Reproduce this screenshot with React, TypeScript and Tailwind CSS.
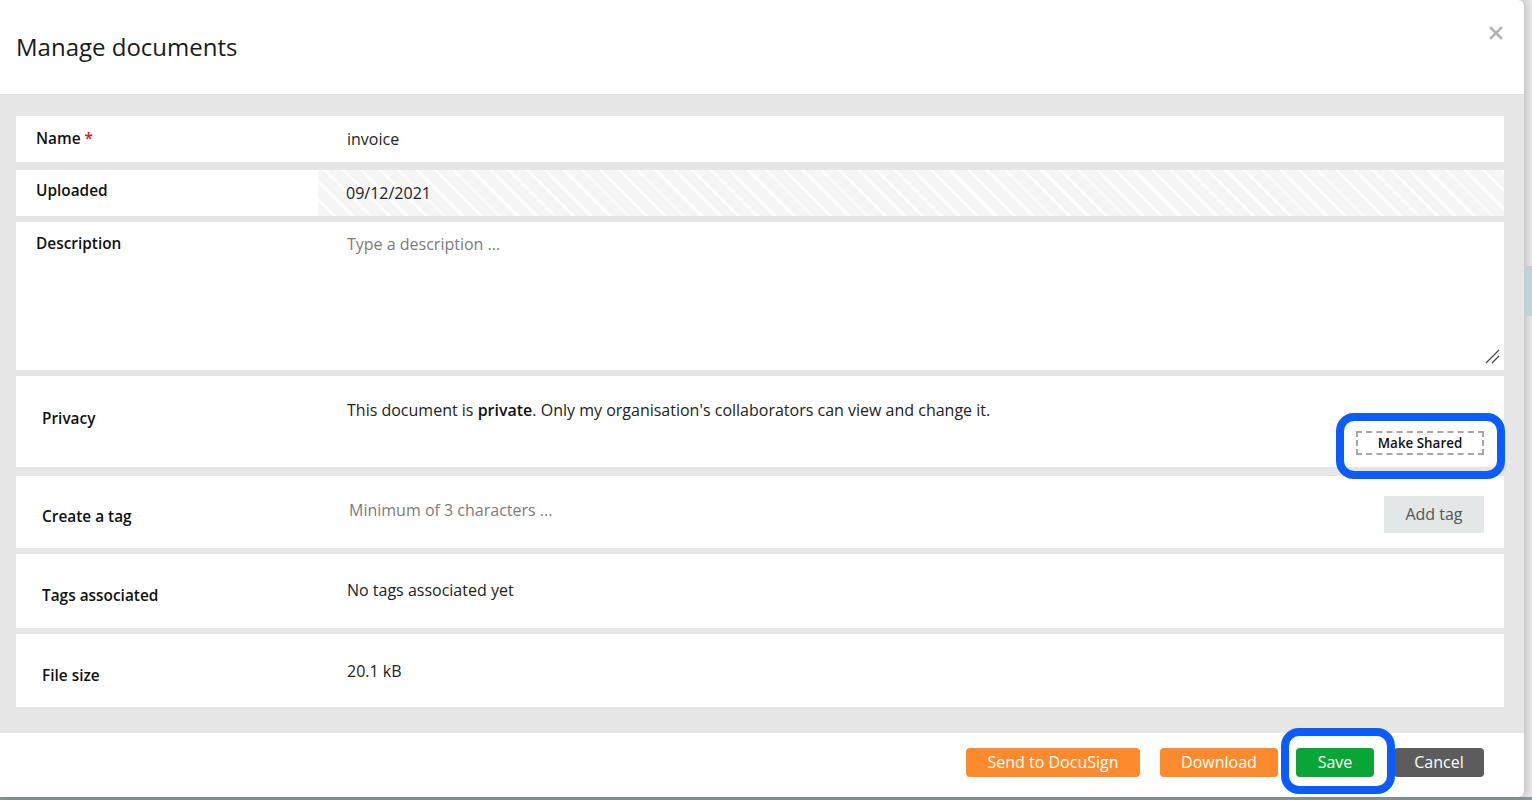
import React from "react";

const labelCls = "text-[15.4px] font-semibold text-[#111]";
const valueCls = "text-[16px] text-[#222]";

const App = () => {
  return (
    <div className="flex h-[800px] w-full flex-col overflow-hidden bg-[#8b9797] font-['Open_Sans',sans-serif]">
      <div className="flex h-[797px] w-full bg-[#e6e6e6]">
        {/* Modal */}
        <div className="flex h-[797px] w-[1524px] shrink-0 flex-col rounded-r-[6px] bg-white shadow-[2px_0_6px_rgba(0,0,0,0.18)]">
          {/* Header */}
          <div className="flex h-[95px] shrink-0 items-start justify-between border-b border-[#dedede] pl-4 pr-[21px]">
            <h1 className="mt-[31px] text-[24px] leading-[32px] text-[#1a1a1a]">Manage documents</h1>
            <button className="mt-[26px] flex h-[14px] w-[14px] items-center justify-center">
              <svg width="14" height="14" viewBox="0 0 14 14">
                <path d="M2 2 L12 12 M12 2 L2 12" stroke="#b3b3b3" strokeWidth="2.6" strokeLinecap="square" />
              </svg>
            </button>
          </div>

          {/* Body */}
          <div className="flex flex-1 flex-col bg-[#e6e6e6] pl-4 pr-5 pt-[21px] pb-[26px]">
            {/* Name */}
            <div className="flex h-[46px] items-center bg-white pl-5">
              <div className={`w-[311px] ${labelCls}`}>
                Name <span className="text-[#e8101a]">*</span>
              </div>
              <div className={valueCls}>invoice</div>
            </div>

            {/* Uploaded */}
            <div className="mt-2 flex h-[46px] bg-white">
              <div className={`flex w-[302px] items-center pl-5 pb-1 ${labelCls}`}>Uploaded</div>
              <div className="flex flex-1 items-center bg-[repeating-linear-gradient(45deg,#f5f5f5_0px,#f5f5f5_10px,#fdfdfd_10px,#fdfdfd_13px)] pl-[28px]">
                <span className={valueCls}>09/12/2021</span>
              </div>
            </div>

            {/* Description */}
            <div className="mt-[6px] flex h-[148px] bg-white">
              <div className={`w-[302px] pl-5 pt-[10px] leading-[24px] ${labelCls}`}>Description</div>
              <textarea
                className="flex-1 resize-none border-0 bg-transparent pl-[29px] pt-[10px] text-[16px] leading-[24px] text-[#222] outline-none placeholder:text-[#7c7c7c]"
                placeholder="Type a description ..."
              />
              <svg className="mb-[6px] mr-[4px] shrink-0 self-end" width="15" height="15" viewBox="0 0 15 15">
                <path d="M1 14 L14 1 M7 14 L14 7" stroke="#4a4a4a" strokeWidth="1.3" />
              </svg>
            </div>

            {/* Privacy */}
            <div className="mt-[6px] flex h-[91px] bg-white pl-[26px] pr-5">
              <div className={`mb-[6px] w-[305px] self-center ${labelCls}`}>Privacy</div>
              <div className="flex flex-1 flex-col pt-[22px]">
                <p className={`leading-[24px] ${valueCls}`}>
                  This document is <span className="font-semibold text-[#111]">private</span>. Only my organisation's
                  collaborators can view and change it.
                </p>
                <div className="relative mt-[9px] self-end">
                  <div className="pointer-events-none absolute -top-[18px] -bottom-[24px] -left-[20px] -right-[21px] rounded-[18px] border-[8px] border-[#0a5cff]" />
                  <button className="flex h-[24px] w-[128px] items-center justify-center border-2 border-dashed border-[#a6a6a6] text-[13.4px] font-semibold text-[#111]">
                    Make Shared
                  </button>
                </div>
              </div>
            </div>

            {/* Create a tag */}
            <div className="mt-[9px] flex h-[72px] items-center bg-white pl-[26px] pr-5">
              <div className={`w-[307px] pt-[10px] ${labelCls}`}>Create a tag</div>
              <input
                className="flex-1 border-0 bg-transparent pb-[4px] text-[16px] text-[#222] outline-none placeholder:text-[#7c7c7c]"
                placeholder="Minimum of 3 characters ..."
              />
              <button className="mt-[4px] flex h-[37px] w-[100px] items-center justify-center bg-[#e3e7e7] text-[16px] text-[#555]">
                Add tag
              </button>
            </div>

            {/* Tags associated */}
            <div className="mt-[6px] flex h-[74px] items-center bg-white pl-[26px] pr-5">
              <div className={`w-[305px] pt-[10px] ${labelCls}`}>Tags associated</div>
              <div className={`pb-[2px] ${valueCls}`}>No tags associated yet</div>
            </div>

            {/* File size */}
            <div className="mt-[6px] flex h-[73px] items-center bg-white pl-[26px] pr-5">
              <div className={`w-[305px] pt-[10px] ${labelCls}`}>File size</div>
              <div className={valueCls}>20.1 kB</div>
            </div>
          </div>

          {/* Footer */}
          <div className="flex h-[64px] shrink-0 items-center justify-end pr-[40px] pb-[6px]">
            <button className="h-[29px] w-[174px] rounded-[4px] bg-[#fd8a2c] text-[16px] text-white">Send to DocuSign</button>
            <button className="ml-5 h-[29px] w-[118px] rounded-[4px] bg-[#fd8a2c] text-[16px] text-white">Download</button>
            <div className="relative ml-[18px]">
              <div className="pointer-events-none absolute -top-[20px] -bottom-[17px] -left-[15px] -right-[21px] rounded-[18px] border-[8px] border-[#0a5cff]" />
              <button className="relative h-[29px] w-[78px] rounded-[4px] bg-[#0aa537] text-[16px] text-white">Save</button>
            </div>
            <button className="ml-5 h-[29px] w-[90px] rounded-[4px] bg-[#5c5c5c] text-[16px] text-white">Cancel</button>
          </div>
        </div>

        {/* Background beyond the modal */}
        <div className="flex flex-1 flex-col pt-[266px]">
          <div className="h-[50px] w-full bg-[#c2d3d6]" />
        </div>
      </div>
    </div>
  );
};

export default App;
